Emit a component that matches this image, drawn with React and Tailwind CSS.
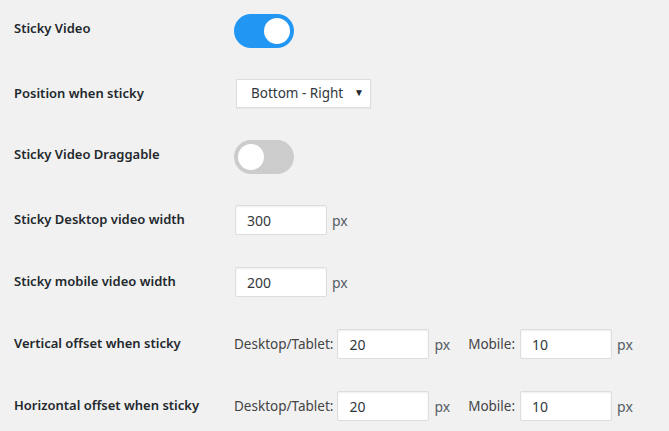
import React, { useState } from "react";

const font = { fontFamily: '"Noto Sans", "Open Sans", sans-serif' };

function Toggle({ on, onChange }) {
  return (
    <button
      type="button"
      onClick={() => onChange(!on)}
      className={`flex h-[34px] w-[60px] items-center rounded-full p-[4px] transition ${
        on ? "justify-end bg-[#2196f3]" : "justify-start bg-[#cccccc]"
      }`}
    >
      <span className="block h-[26px] w-[26px] rounded-full bg-white" />
    </button>
  );
}

function NumberInput({ value }) {
  return (
    <input
      type="text"
      defaultValue={value}
      className="h-[30px] w-[92px] rounded-[2px] border border-[#dddddd] bg-white px-[11px] text-[14px] text-[#32373c] shadow-[inset_0_1px_2px_rgba(0,0,0,0.07)] outline-none"
    />
  );
}

function Row({ label, h, children }) {
  return (
    <div className={`flex items-start ${h}`}>
      <div className="w-[234px] shrink-0 pl-[14px] pt-[4px] text-[13px] font-semibold leading-[20px] text-[#23282d]">
        {label}
      </div>
      <div className="flex items-center">{children}</div>
    </div>
  );
}

const Px = () => <span className="ml-[5px] text-[14px] text-[#555d66]">px</span>;

function OffsetFields() {
  return (
    <div className="flex items-center text-[13.5px] text-[#444]">
      <span className="mr-[4px]">Desktop/Tablet:</span>
      <NumberInput value="20" />
      <Px />
      <span className="ml-[18px] mr-[5px]">Mobile:</span>
      <NumberInput value="10" />
      <Px />
    </div>
  );
}

export default function App() {
  const [sticky, setSticky] = useState(true);
  const [draggable, setDraggable] = useState(false);

  return (
    <div style={font} className="min-h-[431px] w-[669px] bg-[#f1f1f1] pt-[14px]">
      <Row label="Sticky Video" h="h-[65px]">
        <Toggle on={sticky} onChange={setSticky} />
      </Row>
      <Row label="Position when sticky" h="h-[61px]">
        <div className="relative ml-[2px] flex h-[29px] w-[135px] items-center border border-[#dddddd] bg-white pl-[14px] text-[13.5px] text-[#32373c] shadow-[0_1px_1px_rgba(0,0,0,0.04)]">
          Bottom - Right
          <span className="absolute right-[6px] top-[6px] text-[10px] leading-[12px] text-[#23282d]">▼</span>
        </div>
      </Row>
      <Row label="Sticky Video Draggable" h="h-[65px]">
        <Toggle on={draggable} onChange={setDraggable} />
      </Row>
      <Row label="Sticky Desktop video width" h="h-[62px]">
        <div className="ml-[1px] flex items-center">
          <NumberInput value="300" />
          <Px />
        </div>
      </Row>
      <Row label="Sticky mobile video width" h="h-[62px]">
        <div className="ml-[1px] flex items-center">
          <NumberInput value="200" />
          <Px />
        </div>
      </Row>
      <Row label="Vertical offset when sticky" h="h-[62px]">
        <OffsetFields />
      </Row>
      <Row label="Horizontal offset when sticky" h="h-[40px]">
        <OffsetFields />
      </Row>
    </div>
  );
}
